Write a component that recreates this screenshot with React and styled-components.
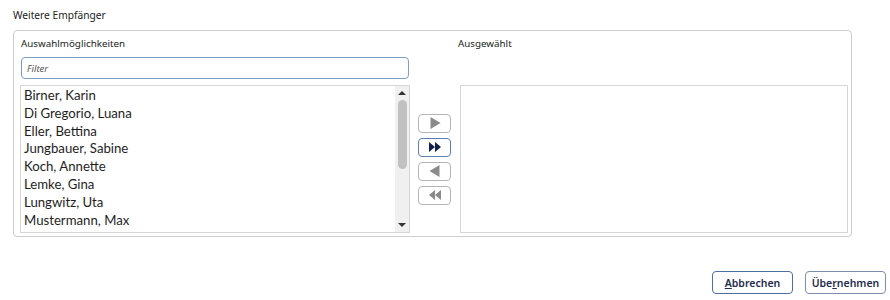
import React from "react";
import styled, { createGlobalStyle } from "styled-components";

const Global = createGlobalStyle`
  html, body { margin: 0; padding: 0; background: #ffffff; }
  body { font-family: "Noto Sans", "Open Sans", sans-serif; color: #1b1b1b; }
`;

const Page = styled.div`
  width: 890px;
  height: 300px;
  box-sizing: border-box;
  padding: 8px 4px 0 13px;
  display: flex;
  flex-direction: column;
`;

const Title = styled.div`
  font-size: 10.2px;
  line-height: 14px;
  height: 14px;
  margin-bottom: 8px;
  color: #222;
`;

const Frame = styled.div`
  width: 839px;
  height: 207px;
  box-sizing: border-box;
  border: 1px solid #cdcdcd;
  border-radius: 4px;
  padding: 6px 3px 3px 6px;
  display: grid;
  grid-template-columns: 390px 50px 388px;
  grid-template-rows: 14px 34px 148px;
`;

const Label = styled.div`
  font-size: 9.8px;
  line-height: 14px;
  color: #222;
  grid-column: ${(p) => p.col};
  grid-row: 1;
  padding-left: ${(p) => (p.col === 3 ? "0" : "1px")};
  margin-left: ${(p) => (p.col === 3 ? "-2px" : "0")};
`;

const FilterInput = styled.input`
  grid-column: 1;
  grid-row: 2;
  align-self: start;
  margin: 6px 0 0 1px;
  width: 388px;
  height: 22px;
  box-sizing: border-box;
  border: 1.5px solid #7f9cc4;
  border-radius: 4px;
  padding: 0 5px;
  font-family: "Noto Sans", "Open Sans", sans-serif;
  font-size: 9.5px;
  font-style: italic;
  outline: none;
  &::placeholder { color: #555; }
`;

const ListBox = styled.div`
  grid-column: ${(p) => p.col};
  grid-row: 3;
  box-sizing: border-box;
  border: 1px solid #d6d6d6;
  display: flex;
  overflow: hidden;
  background: #fff;
`;

const Items = styled.div`
  flex: 1;
  padding: 1px 0 0 3px;
  overflow: hidden;
`;

const Item = styled.div`
  font-family: Lato, "Noto Sans", sans-serif;
  font-size: 13.2px;
  line-height: 17.8px;
  height: 17.8px;
  white-space: nowrap;
  color: #1e1e1e;
`;

const ScrollTrack = styled.div`
  width: 14px;
  background: #f0f0f0;
  display: flex;
  flex-direction: column;
  align-items: center;
  padding: 3px 0;
  box-sizing: border-box;
`;

const Arrow = styled.div`
  width: 0;
  height: 0;
  border-left: 4px solid transparent;
  border-right: 4px solid transparent;
  ${(p) =>
    p.up
      ? "border-bottom: 4px solid #333;"
      : "border-top: 4px solid #333;"}
  margin: 2px 0;
`;

const Thumb = styled.div`
  width: 9px;
  height: 69px;
  border-radius: 5px;
  background: #c1c1c1;
  margin-top: 3px;
`;

const Spacer = styled.div`
  flex: 1;
`;

const Buttons = styled.div`
  grid-column: 2;
  grid-row: 3;
  display: flex;
  flex-direction: column;
  align-items: center;
  justify-content: center;
  gap: 5px;
  padding-right: 1px;
`;

const MoveButton = styled.button`
  width: 33px;
  height: 19px;
  box-sizing: border-box;
  border: 1px solid ${(p) => (p.active ? "#5b7fb2" : "#b5b5b5")};
  border-radius: 4px;
  background: #fff;
  padding: 0;
  display: flex;
  align-items: center;
  justify-content: center;
  color: ${(p) => (p.active ? "#13214d" : "#8b8b8b")};
`;

const Footer = styled.div`
  display: flex;
  justify-content: flex-end;
  gap: 12px;
  margin-top: 34px;
`;

const DialogButton = styled.button`
  width: 81px;
  height: 23px;
  box-sizing: border-box;
  border: 1px solid ${(p) => (p.primary ? "#4f6f9e" : "#7d8ea8")};
  border-radius: 4px;
  background: #fff;
  font-family: "Noto Sans", "Open Sans", sans-serif;
  font-size: 10.5px;
  font-weight: 600;
  color: #1f2d4f;
  padding: 0;
  u { text-decoration: underline; text-underline-offset: 1px; }
`;

const Icon = ({ kind }) => {
  if (kind === "right") {
    return (
      <svg width="16" height="14" viewBox="0 0 16 14">
        <path d="M3.5 1 L13.5 7 L3.5 13 Z" fill="currentColor" />
      </svg>
    );
  }
  if (kind === "left") {
    return (
      <svg width="16" height="14" viewBox="0 0 16 14">
        <path d="M12.5 1 L2.5 7 L12.5 13 Z" fill="currentColor" />
      </svg>
    );
  }
  if (kind === "rightAll") {
    return (
      <svg width="16" height="14" viewBox="0 0 16 14">
        <path d="M2 2 L8 7 L2 12 Z M8 2 L14 7 L8 12 Z" fill="currentColor" />
      </svg>
    );
  }
  return (
    <svg width="16" height="14" viewBox="0 0 16 14">
      <path d="M8 2 L2 7 L8 12 Z M14 2 L8 7 L14 12 Z" fill="currentColor" />
    </svg>
  );
};

const names = [
  "Birner, Karin",
  "Di Gregorio, Luana",
  "Eller, Bettina",
  "Jungbauer, Sabine",
  "Koch, Annette",
  "Lemke, Gina",
  "Lungwitz, Uta",
  "Mustermann, Max",
  "Schmied, Nora",
];

export default function App() {
  return (
    <>
      <Global />
      <Page>
        <Title>Weitere Empfänger</Title>
        <Frame>
          <Label col={1}>Auswahlmöglichkeiten</Label>
          <Label col={3}>Ausgewählt</Label>
          <FilterInput placeholder="Filter" />
          <ListBox col={1}>
            <Items>
              {names.map((n) => (
                <Item key={n}>{n}</Item>
              ))}
            </Items>
            <ScrollTrack>
              <Arrow up />
              <Thumb />
              <Spacer />
              <Arrow />
            </ScrollTrack>
          </ListBox>
          <Buttons>
            <MoveButton><Icon kind="right" /></MoveButton>
            <MoveButton active><Icon kind="rightAll" /></MoveButton>
            <MoveButton><Icon kind="left" /></MoveButton>
            <MoveButton><Icon kind="leftAll" /></MoveButton>
          </Buttons>
          <ListBox col={3} />
        </Frame>
        <Footer>
          <DialogButton primary><u>A</u>bbrechen</DialogButton>
          <DialogButton>Übe<u>r</u>nehmen</DialogButton>
        </Footer>
      </Page>
    </>
  );
}
